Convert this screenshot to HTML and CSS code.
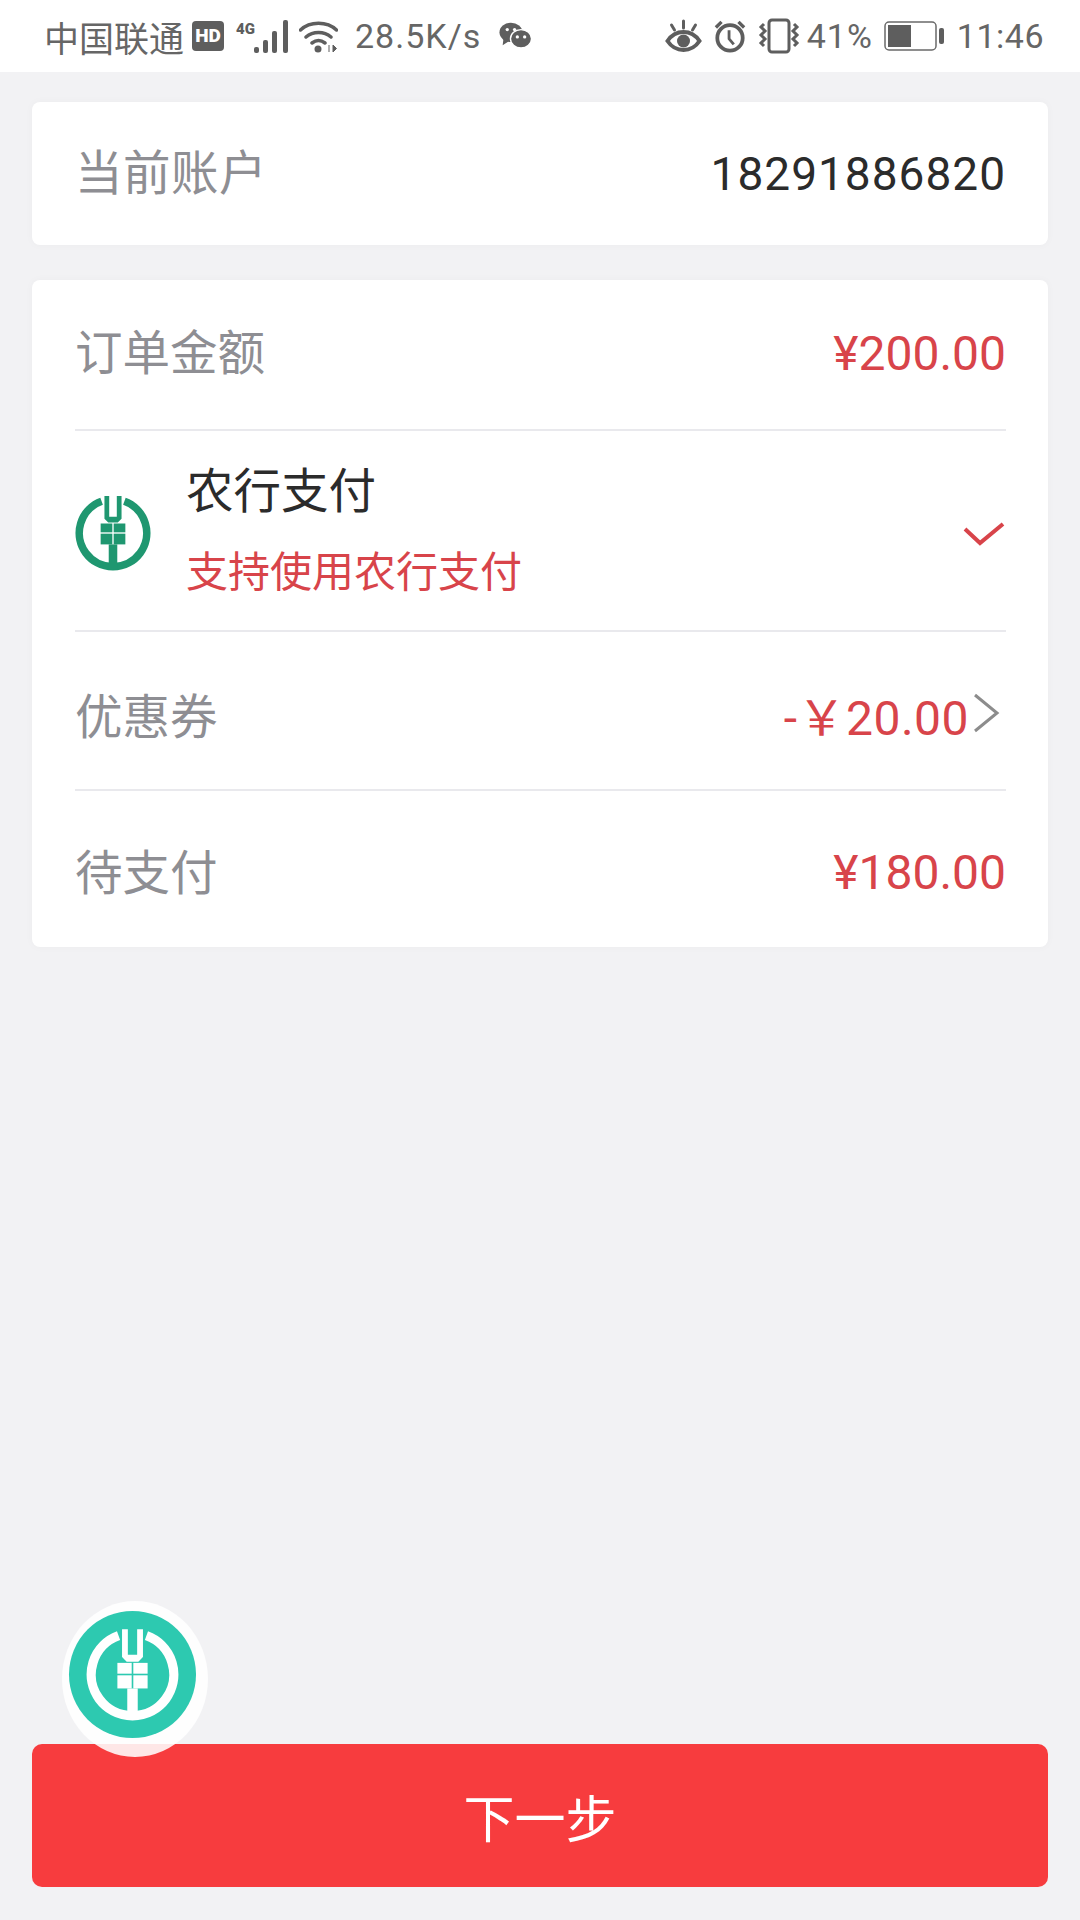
FILE: index.html
```html
<!DOCTYPE html>
<html lang="zh-CN">
<head>
    <meta charset="UTF-8">
    <meta name="viewport" content="width=device-width, initial-scale=1.0">
    <title>农行支付</title>
    <link rel="stylesheet" href="styles.css">
</head>
<body>
    <svg class="defs" width="0" height="0">
        <!-- bank mark: open ring, wheat ear and stem -->
        <symbol id="abc-mark" viewBox="0 0 80 80">
            <path d="M28 6.600A35.500 35.500 0 1 0 52 6.600" fill="none" stroke="currentColor" stroke-width="8"/>
            <path d="M31 1h5v22h8V1h5v24l-4 4H35l-4-4z" fill="currentColor"/>
            <rect x="27" y="30" width="12.300" height="9.300" fill="currentColor"/>
            <rect x="40.700" y="30" width="12.300" height="9.300" fill="currentColor"/>
            <rect x="27" y="40.700" width="12.300" height="11.300" fill="currentColor"/>
            <rect x="40.700" y="40.700" width="12.300" height="11.300" fill="currentColor"/>
            <rect x="35.500" y="52" width="9" height="26" fill="currentColor"/>
        </symbol>
    </svg>

    <div class="status-bar">
        <div class="status-left">
            <span class="carrier">中国联通</span>
            <span class="hd">HD</span>
            <span class="net">4G</span>
            <svg class="signal" width="35" height="36" viewBox="0 0 35 36">
                <rect x="0" y="29" width="5" height="6" rx="2"/>
                <rect x="9" y="22" width="5" height="13" rx="2"/>
                <rect x="18" y="13" width="5" height="22" rx="2"/>
                <rect x="29" y="2" width="5" height="33" rx="2"/>
            </svg>
            <svg class="wifi" width="39" height="36" viewBox="0 0 39 36">
                <path d="M1.500 12C11 3 28 3 37.500 12M7 19C14 13 25 13 32 19M13 25C17 22 22 22 26 25" fill="none" stroke="#5e5e5e" stroke-width="3.500" stroke-linecap="round"/>
                <circle cx="19" cy="31" r="3.500" fill="#5e5e5e"/>
                <path d="M30 27v7M34 27l3.500 3.500-3.500 3.500z" fill="#5e5e5e" stroke="#5e5e5e"/>
            </svg>
            <span class="speed">28.5K/s</span>
            <svg class="wechat" width="33" height="30" viewBox="0 0 36 30">
                <ellipse cx="13" cy="11" rx="12.500" ry="10.500" fill="#5e5e5e"/>
                <path d="M5 17l-1 8 8-5z" fill="#5e5e5e"/>
                <ellipse cx="24" cy="18" rx="11.500" ry="10" fill="#5e5e5e" stroke="#fff" stroke-width="1.500"/>
                <circle cx="9" cy="8" r="1.800" fill="#fff"/>
                <circle cx="17" cy="8" r="1.800" fill="#fff"/>
                <circle cx="20" cy="16" r="1.800" fill="#fff"/>
                <circle cx="28" cy="16" r="1.800" fill="#fff"/>
            </svg>
        </div>
        <div class="status-right">
            <svg class="eye" width="37" height="36" viewBox="0 0 36 36">
                <path d="M2 23C10 11 26 11 34 23C26 35 10 35 2 23Z" fill="none" stroke="#5e5e5e" stroke-width="4"/>
                <circle cx="18" cy="23" r="6.500" fill="#5e5e5e"/>
                <path d="M18 3v7M6 7l3 5M30 7l-3 5" stroke="#5e5e5e" stroke-width="3" stroke-linecap="round"/>
            </svg>
            <svg class="alarm" width="32" height="36" viewBox="0 0 34 36">
                <circle cx="17" cy="20" r="13.500" fill="none" stroke="#5e5e5e" stroke-width="4"/>
                <path d="M16 12v9l5 6" fill="none" stroke="#5e5e5e" stroke-width="3"/>
                <path d="M2 9l6-6M32 9l-6-6" stroke="#5e5e5e" stroke-width="3.500"/>
            </svg>
            <svg class="vibrate" width="42" height="36" viewBox="0 0 42 36">
                <rect x="11" y="2" width="20" height="32" rx="3" fill="none" stroke="#5e5e5e" stroke-width="3"/>
                <path d="M6 6l-3 3 4 4-4 4 4 4-4 4 3 3M36 6l3 3-4 4 4 4-4 4 4 4-3 3" fill="none" stroke="#5e5e5e" stroke-width="3"/>
            </svg>
            <span class="percent">41%</span>
            <svg class="battery" width="61" height="30" viewBox="0 0 61 30">
                <rect x="1" y="1" width="51" height="28" rx="4" fill="none" stroke="#6a6a6a" stroke-width="1.500"/>
                <rect x="4" y="4" width="23" height="22" fill="#5e5e5e"/>
                <rect x="55" y="7" width="5" height="16" rx="2" fill="#5e5e5e"/>
            </svg>
            <span class="clock">11:46</span>
        </div>
    </div>

    <div class="content">
        <div class="card account">
            <span class="label account-label">当前账户</span>
            <span class="account-no">18291886820</span>
        </div>

        <div class="card detail">
            <div class="row row-amount">
                <span class="label">订单金额</span>
                <span class="price">¥200.00</span>
            </div>
            <div class="row row-pay">
                <svg class="abc-logo" width="76" height="76"><use href="#abc-mark"/></svg>
                <div class="pay-text">
                    <div class="pay-name">农行支付</div>
                    <div class="pay-tip">支持使用农行支付</div>
                </div>
                <svg class="check" width="42" height="26" viewBox="0 0 42 26">
                    <path d="M2 8l15 14L40 3" fill="none" stroke="#d8444a" stroke-width="4"/>
                </svg>
            </div>
            <div class="row row-coupon">
                <span class="label">优惠券</span>
                <span class="coupon-value">
                    <span class="price coupon-price">-￥20.00</span>
                    <svg class="arrow" width="28" height="42" viewBox="0 0 28 42">
                        <path d="M3 3l22 18L3 39" fill="none" stroke="#8c8c8c" stroke-width="3"/>
                    </svg>
                </span>
            </div>
            <div class="row row-total">
                <span class="label">待支付</span>
                <span class="price">¥180.00</span>
            </div>
        </div>
    </div>

    <button class="next-btn">下一步</button>

    <!-- floating shortcut, sits over the page -->
    <div class="float-ball">
        <svg class="float-mark" width="93" height="93"><use href="#abc-mark"/></svg>
    </div>
</body>
</html>
```

FILE: styles.css
```css
* {
    box-sizing: border-box;
}

body {
    margin: 0;
    width: 1080px;
    height: 1920px;
    position: relative;
    overflow: hidden;
    background: #f2f2f4;
    font-family: Roboto, "Noto Sans CJK SC", sans-serif;
}

.defs {
    position: absolute;
}

.status-bar {
    height: 72px;
    padding: 0 36px 0 44px;
    background: #fff;
    color: #666;
    font-size: 34px;
    display: flex;
    justify-content: space-between;
    align-items: center;
}

.status-left,
.status-right {
    display: flex;
    align-items: center;
}

.status-bar svg {
    fill: #5e5e5e;
}

.carrier {
    font-size: 35px;
}

.hd {
    margin-left: 8px;
    width: 32px;
    height: 30px;
    border-radius: 4px;
    background: #5e5e5e;
    color: #fff;
    font-size: 19px;
    font-weight: 900;
    line-height: 30px;
    text-align: center;
}

.net {
    width: 18px;
    margin: 0 0 14px 12px;
    font-size: 15px;
    font-weight: 900;
    color: #5e5e5e;
}

.wifi {
    margin-left: 10px;
}

.speed {
    margin-left: 17px;
    letter-spacing: 1px;
}

.wechat {
    margin-left: 18px;
}

.alarm {
    margin-left: 12px;
}

.vibrate {
    margin-left: 12px;
}

.percent {
    margin-left: 7px;
    letter-spacing: 1px;
}

.battery {
    margin-left: 11px;
}

.clock {
    margin-left: 12px;
    letter-spacing: 0.500px;
}

.content {
    padding: 30px 32px 0;
}

.card {
    background: #fff;
    border-radius: 8px;
    box-shadow: 0 0 8px rgba(0, 0, 0, 0.03);
}

.account {
    height: 143px;
    padding: 0 42px 0 43px;
    display: flex;
    justify-content: space-between;
    align-items: center;
}

.label {
    color: #8e8e93;
    font-size: 47.500px;
}

.account-label {
    margin-bottom: 8px;
    letter-spacing: 0.500px;
}

.account-no {
    color: #2b2b2b;
    font-size: 46px;
    letter-spacing: 1px;
}

.detail {
    margin-top: 35px;
    height: 667px;
    padding: 0 42px 0 43px;
}

.row {
    display: flex;
    justify-content: space-between;
    align-items: center;
    border-bottom: 2px solid #e9e9ed;
}

.row-amount {
    height: 151px;
}

.row-amount .label {
    margin-bottom: 10px;
}

.row-amount .price {
    margin-bottom: 2px;
}

.row-pay {
    height: 201px;
    justify-content: flex-start;
}

.row-coupon {
    height: 159px;
}

.row-coupon .label {
    margin-top: 5px;
}

.row-total {
    height: 156px;
    border-bottom: none;
}

.row-total .price {
    margin-top: 6px;
}

.price {
    color: #d8444a;
    font-size: 48px;
}

.abc-logo {
    margin-top: 4px;
    color: #1f9770;
    flex: none;
}

.pay-text {
    margin-left: 35px;
    flex: 1;
}

.pay-name {
    color: #2b2b2b;
    font-size: 47.500px;
    line-height: 64px;
}

.pay-tip {
    margin-top: 21px;
    color: #d8444a;
    font-size: 42px;
    line-height: 56px;
}

.check {
    margin: 7px 1px 0 0;
}

.coupon-value {
    display: flex;
    align-items: center;
    gap: 3px;
    margin-right: 6px;
}

.coupon-price {
    margin-top: 6px;
    letter-spacing: 0.500px;
}

.arrow {
    margin-top: 4px;
}

.next-btn {
    position: absolute;
    left: 32px;
    top: 1744px;
    width: 1016px;
    height: 143px;
    border: none;
    border-radius: 10px;
    background: #f73c3e;
    color: #fff;
    font-family: inherit;
    font-size: 51px;
}

.float-ball {
    position: absolute;
    left: 62px;
    top: 1601px;
    width: 146px;
    height: 156px;
    border-radius: 50%;
    background: rgba(255, 255, 255, 0.88);
}

.float-ball::before {
    content: "";
    position: absolute;
    left: 7px;
    top: 10px;
    width: 127px;
    height: 127px;
    border-radius: 50%;
    background: #2dc9b0;
}

.float-mark {
    position: absolute;
    left: 24px;
    top: 27px;
    color: #fff;
}
```
